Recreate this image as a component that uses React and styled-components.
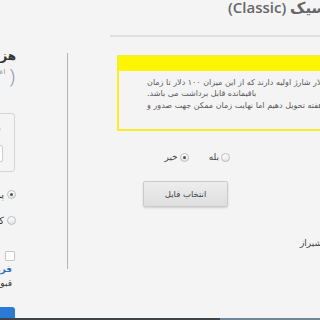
import React from 'react';
import styled, { createGlobalStyle } from 'styled-components';

const GlobalStyle = createGlobalStyle`
  html, body { margin: 0; padding: 0; background: #f4f4f4; overflow: hidden; }
  body { font-family: "DejaVu Sans", "Noto Sans", sans-serif; }
  * { box-sizing: border-box; }
`;

const Viewport = styled.div`
  width: 320px;
  height: 320px;
  overflow: hidden;
  background: #f4f4f4;
`;

const Canvas = styled.div`
  width: 560px;
  margin-left: -120px;
  direction: rtl;
`;

const Header = styled.header`
  margin-left: 230px;
  height: 39px;
  border-bottom: 2px solid #e0e0e0;
  text-align: left;
  padding-left: 118px;
`;

const Title = styled.h1`
  margin: 0;
  margin-top: -2px;
  font-family: "Open Sans", "DejaVu Sans", sans-serif;
  font-weight: 600;
  font-size: 15px;
  line-height: 18px;
  color: #666;
  white-space: nowrap;
`;

const BodyRow = styled.div`
  display: flex;
  align-items: flex-start;
  gap: 51px;
  margin-top: 11px;
`;

const Main = styled.main`
  width: 373px;
  margin-top: 5px;
  border-left: 1px solid #b4b4b4;
  padding: 2px 20px 20px 49px;
`;

const Notice = styled.div`
  border: 2px solid #f7ee2a;
`;

const NoticeHead = styled.div`
  height: 14px;
  background: #fff500;
`;

const NoticeBody = styled.div`
  padding: 5.5px 10px 18px 28px;
  font-size: 8px;
  line-height: 11.5px;
  color: #585858;
  text-align: left;
`;

const Line = styled.div`
  white-space: nowrap;
`;

const FormRow = styled.div`
  display: flex;
  align-items: center;
  margin-top: ${p => p.$mt}px;
  min-height: ${p => p.$h}px;
`;

const LabelCell = styled.div`
  width: 188px;
  flex: none;
  font-size: 9px;
  color: #444;
  text-align: left;
  padding-left: ${p => p.$pl || 0}px;
  white-space: nowrap;
  overflow: hidden;
`;

const FieldCell = styled.div`
  flex: 1;
  display: flex;
  align-items: center;
  padding-right: ${p => p.$pr || 0}px;
`;

const Options = styled.div`
  display: flex;
  align-items: center;
  gap: 20px;
`;

const Option = styled.label`
  display: flex;
  align-items: center;
  gap: 2px;
  font-size: 9px;
  color: #444;
`;

const Radio = styled.span`
  width: 9px;
  height: 9px;
  flex: none;
  border-radius: 50%;
  border: 1px solid #bdbdbd;
  background: linear-gradient(#ffffff, #e4e4e4);
  display: inline-flex;
  align-items: center;
  justify-content: center;
  &::after {
    content: '';
    width: 3px;
    height: 3px;
    border-radius: 50%;
    background: ${p => (p.$checked ? '#505050' : 'transparent')};
  }
`;

const FileButton = styled.button`
  width: 85px;
  height: 26px;
  border: 1px solid #cbcbcb;
  border-radius: 2px;
  background: linear-gradient(#ededed, #dedede);
  box-shadow: 0 1px 2px rgba(0, 0, 0, 0.15);
  font-family: "DejaVu Sans", sans-serif;
  font-size: 8.5px;
  color: #444;
  padding: 0;
`;

const Sidebar = styled.aside`
  width: 136px;
  display: flex;
  flex-direction: column;
  align-items: stretch;
`;

const SideTitle = styled.div`
  font-weight: bold;
  font-size: 12px;
  line-height: 16px;
  color: #333;
  white-space: nowrap;
`;

const CreditLine = styled.div`
  display: flex;
  align-items: flex-start;
  height: 22px;
  margin-top: 1px;
  white-space: nowrap;
`;

const BigParen = styled.span`
  font-family: "Open Sans", sans-serif;
  font-weight: 300;
  font-size: 21px;
  line-height: 22px;
  color: #8496ad;
  margin-right: 1px;
`;

const SmallNote = styled.span`
  font-size: 6.5px;
  color: #888;
  margin-top: 3px;
  margin-right: 4px;
`;

const CouponBox = styled.div`
  margin-top: 26px;
  margin-right: 1px;
  height: 59px;
  border: 1px solid #d4d4d4;
  border-radius: 3px;
  padding: 12px 11px 0 0;
`;

const CouponLabel = styled.div`
  font-weight: bold;
  font-size: 10px;
  line-height: 14px;
  color: #333;
  padding-right: 3px;
  white-space: nowrap;
`;

const CouponInput = styled.div`
  margin-top: 5px;
  height: 17px;
  background: #fff;
  border: 1px solid #cfcfcf;
  border-radius: 2px;
`;

const PayList = styled.div`
  display: flex;
  flex-direction: column;
  gap: 12px;
  margin-top: 15px;
`;

const PayOption = styled.label`
  display: flex;
  align-items: center;
  gap: 3px;
  height: 14px;
  font-size: 10px;
  color: #333;
  white-space: nowrap;
`;

const Checkbox = styled.span`
  display: block;
  width: 10px;
  height: 10px;
  margin-top: 24px;
  margin-right: 1px;
  background: #fff;
  border: 1px solid #c6c6c6;
  border-radius: 1px;
`;

const TermsLink = styled.a`
  display: block;
  margin-top: 2px;
  margin-right: 4px;
  font-size: 9px;
  line-height: 13px;
  font-weight: bold;
  color: #2a6fc0;
  text-decoration: none;
  white-space: nowrap;
`;

const TermsText = styled.div`
  margin-right: 4px;
  margin-top: 1px;
  font-size: 9px;
  line-height: 13px;
  color: #333;
  white-space: nowrap;
`;

const SubmitButton = styled.button`
  margin-top: 17px;
  margin-right: 1px;
  height: 30px;
  border: none;
  border-radius: 3px;
  background: #2b7bd4;
  color: #fff;
  font-family: "DejaVu Sans", sans-serif;
  font-size: 11px;
  padding: 6px 0 0;
  text-align: left;
`;

const Footer = styled.footer`
  position: fixed;
  left: 0;
  right: 0;
  bottom: 0;
  height: 2px;
  background: linear-gradient(to right, #3f4448 0 220px, #72859a 220px);
`;

export default function App() {
  return (
    <>
      <GlobalStyle />
      <Viewport>
        <Canvas>
          <Header>
            <Title>حساب کلاسیک (Classic)</Title>
          </Header>
          <BodyRow>
            <Main>
              <Notice>
                <NoticeHead />
                <NoticeBody>
                  <Line>حساب ها ۲۰۰ دلار شارژ اولیه دارند که از این میزان ۱۰۰ دلار تا زمان</Line>
                  <Line>باقیمانده قابل برداشت می باشد.</Line>
                  <Line>را ظرف دو هفته تحویل دهیم اما نهایت زمان ممکن جهت صدور و</Line>
                </NoticeBody>
              </Notice>
              <FormRow $mt={18} $h={16}>
                <LabelCell $pl={110}>آیا کارت اعتباری دارید؟</LabelCell>
                <FieldCell $pr={2}>
                  <Options>
                    <Option>
                      <Radio />
                      بله
                    </Option>
                    <Option>
                      <Radio $checked />
                      خیر
                    </Option>
                  </Options>
                </FieldCell>
              </FormRow>
              <FormRow $mt={16} $h={26}>
                <LabelCell $pl={110}>تصویر مدرک شناسایی</LabelCell>
                <FieldCell $pr={4}>
                  <FileButton>انتخاب فایل</FileButton>
                </FieldCell>
              </FormRow>
              <FormRow $mt={30} $h={12}>
                <LabelCell $pl={68}>دفتر مرکزی: شیراز</LabelCell>
                <FieldCell />
              </FormRow>
            </Main>
            <Sidebar>
              <SideTitle>هزینه نهایی سفارش</SideTitle>
              <CreditLine>
                <BigParen>(</BigParen>
                <SmallNote>اعتبار حساب</SmallNote>
              </CreditLine>
              <CouponBox>
                <CouponLabel>کد تخفیف</CouponLabel>
                <CouponInput />
              </CouponBox>
              <PayList>
                <PayOption>
                  <Radio $checked />
                  پرداخت آنلاین
                </PayOption>
                <PayOption>
                  <Radio />
                  کارت به کارت
                </PayOption>
              </PayList>
              <Checkbox />
              <TermsLink href="#">فرم قوانین و مقررات</TermsLink>
              <TermsText>قبول دارم</TermsText>
              <SubmitButton>پرداخت</SubmitButton>
            </Sidebar>
          </BodyRow>
        </Canvas>
      </Viewport>
      <Footer />
    </>
  );
}
